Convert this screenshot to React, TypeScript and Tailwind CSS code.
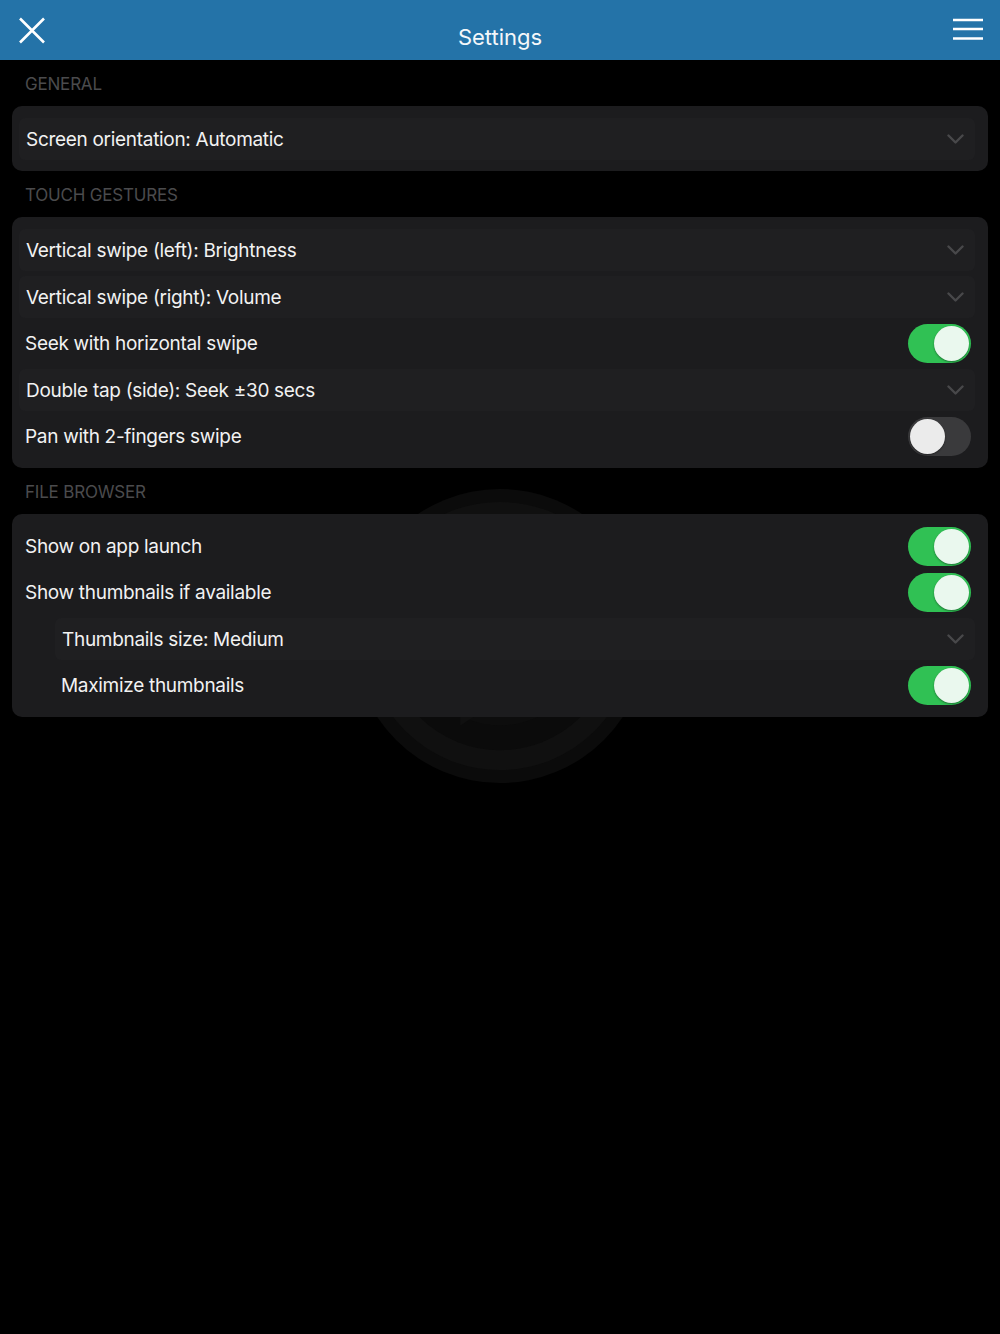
import type { ReactNode } from "react";

function Chevron() {
  return (
    <svg width="17" height="11" viewBox="0 0 17 11" className="shrink-0">
      <path d="M1.5 1.5 L8.5 8.5 L15.5 1.5" fill="none" stroke="#48484a" strokeWidth="2.4" strokeLinecap="round" strokeLinejoin="round" />
    </svg>
  );
}

function Toggle({ on }: { on: boolean }) {
  return (
    <div
      className={`relative w-[63px] h-[39px] rounded-full shrink-0 ${on ? "bg-[#30c154]" : "bg-[#3a3a3c]"}`}
    >
      <div
        className={`absolute top-[2px] w-[35px] h-[35px] rounded-full shadow-[0_1px_2px_rgba(0,0,0,0.4)] ${
          on ? "right-[2px] bg-[#eaf8ee]" : "left-[2px] bg-[#ebebeb]"
        }`}
      />
    </div>
  );
}

const labelText = "flex-1 pt-[2px] text-[19px] tracking-[-0.3px] text-[#f2f2f2]";

function SelectRow({ label, indent = false }: { label: string; indent?: boolean }) {
  return (
    <div className={`flex items-center h-[42px] rounded-md bg-[#1f1f21] pl-[7px] pr-[11px] mr-[6px] ${indent ? "ml-[36px]" : ""}`}>
      <span className={labelText}>{label}</span>
      <Chevron />
    </div>
  );
}

function ToggleRow({ label, on, indent = false }: { label: string; on: boolean; indent?: boolean }) {
  return (
    <div className={`flex items-center h-[41px] pr-[10px] ${indent ? "pl-[42px]" : "pl-[6px]"}`}>
      <span className={labelText}>{label}</span>
      <Toggle on={on} />
    </div>
  );
}

function Section({ title, children }: { title: string; children: ReactNode }) {
  return (
    <div>
      <div className="h-[46px] flex items-center pl-[25px] pt-[3px] text-[17px] tracking-[-0.2px] text-[#4b4b4d]">{title}</div>
      <div className="mx-[12px] rounded-[10px] bg-[#1c1c1e] px-[7px] pt-[12px] pb-[11px] flex flex-col gap-[5px]">{children}</div>
    </div>
  );
}

export default function App() {
  return (
    <div className="relative min-h-[1334px] bg-black overflow-hidden" style={{ fontFamily: "Inter, 'Noto Sans', sans-serif" }}>
      {/* faint watermark logo behind the list */}
      <svg className="absolute left-[351px] top-[486px]" width="298" height="300" viewBox="0 0 300 300">
        <circle cx="150" cy="150" r="148" fill="#0b0b0b" />
        <circle cx="150" cy="150" r="125" fill="none" stroke="#101010" strokeWidth="20" />
        <circle cx="150" cy="150" r="90" fill="#0d0d0d" />
        <path d="M110 60 L110 240 L250 150 Z" fill="#101010" />
      </svg>

      <header className="relative h-[60px] bg-[#2473a8] flex items-center justify-center">
        <svg className="absolute left-[18px] top-[17px]" width="28" height="27" viewBox="0 0 28 27">
          <path d="M2 1.5 L26 25.5 M26 1.5 L2 25.5" stroke="#fff" strokeWidth="2.6" />
        </svg>
        <h1 className="text-[22px] text-[#f4f7fa] pt-[14px]">Settings</h1>
        <svg className="absolute right-[16px] top-[18px]" width="32" height="24" viewBox="0 0 32 24">
          <path d="M1 2 H31 M1 11 H31 M1 20.5 H31" stroke="#fff" strokeWidth="2.6" />
        </svg>
      </header>

      <div className="relative">
        <Section title="GENERAL">
          <SelectRow label="Screen orientation: Automatic" />
        </Section>

        <Section title="TOUCH GESTURES">
          <SelectRow label="Vertical swipe (left): Brightness" />
          <SelectRow label="Vertical swipe (right): Volume" />
          <ToggleRow label="Seek with horizontal swipe" on={true} />
          <SelectRow label="Double tap (side): Seek ±30 secs" />
          <ToggleRow label="Pan with 2-fingers swipe" on={false} />
        </Section>

        <Section title="FILE BROWSER">
          <ToggleRow label="Show on app launch" on={true} />
          <ToggleRow label="Show thumbnails if available" on={true} />
          <SelectRow label="Thumbnails size: Medium" indent />
          <ToggleRow label="Maximize thumbnails" on={true} indent />
        </Section>
      </div>
    </div>
  );
}
